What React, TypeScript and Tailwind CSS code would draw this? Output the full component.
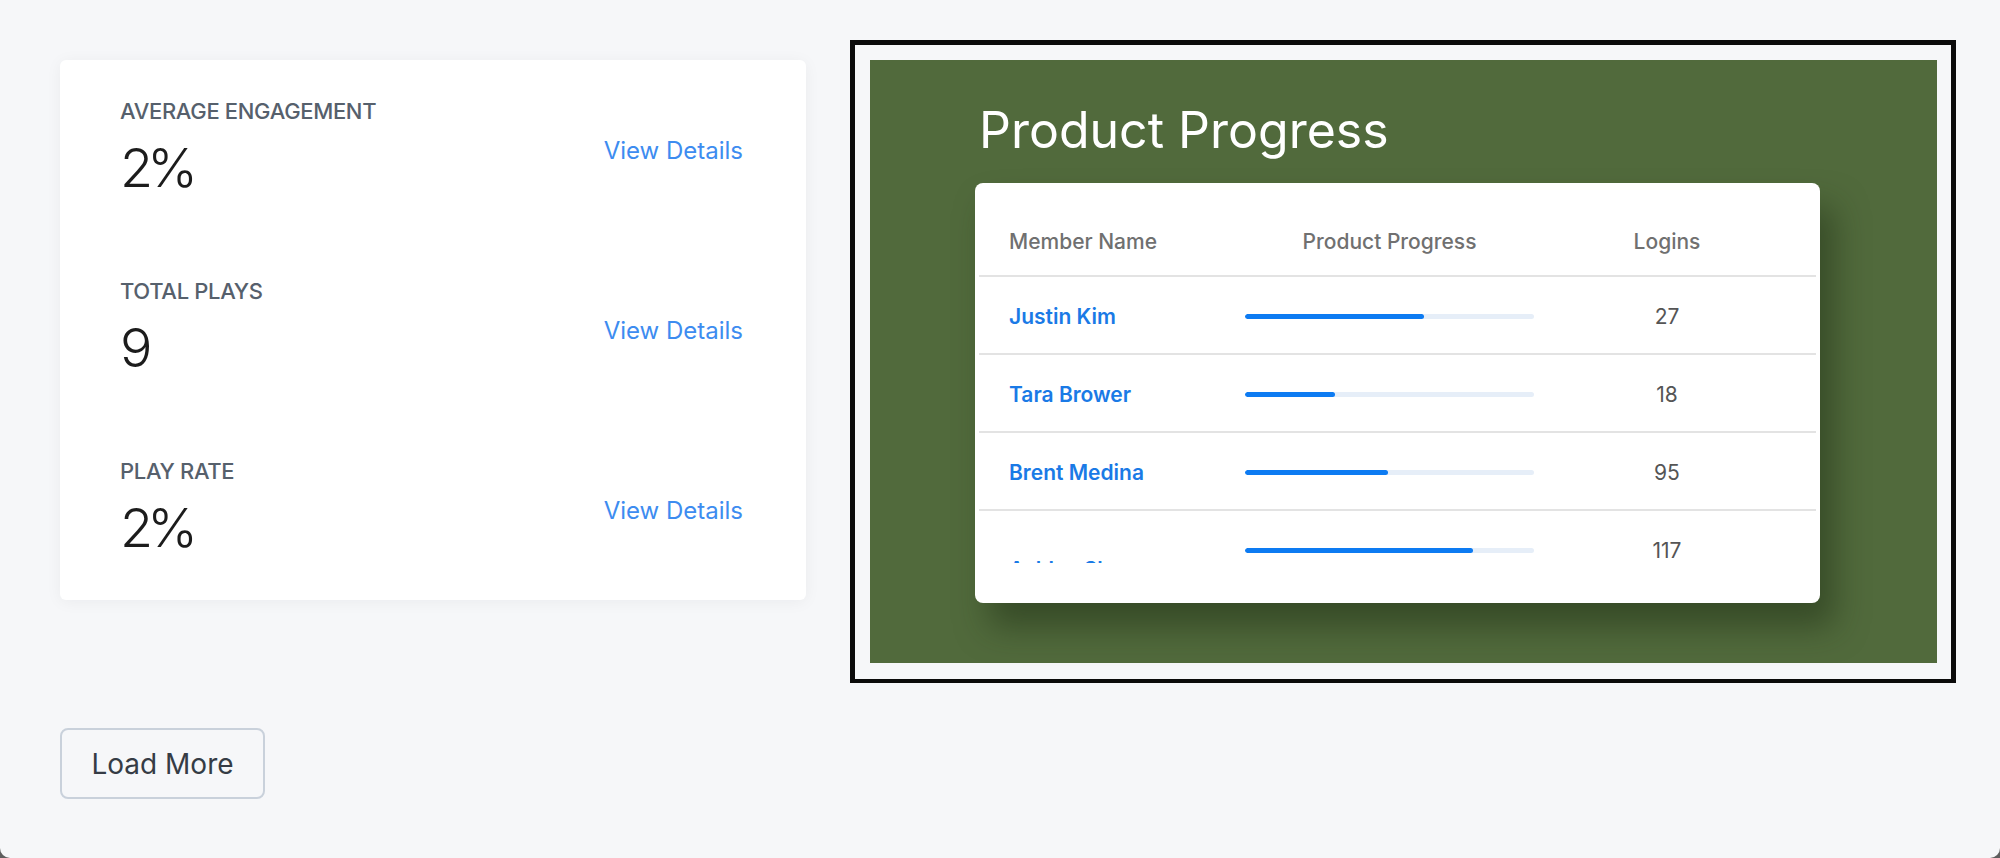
import React from "react";

const stats = [
  { label: "AVERAGE ENGAGEMENT", value: "2%" },
  { label: "TOTAL PLAYS", value: "9" },
  { label: "PLAY RATE", value: "2%" },
];

const members = [
  { name: "Justin Kim", pct: 62, logins: "27" },
  { name: "Tara Brower", pct: 31, logins: "18" },
  { name: "Brent Medina", pct: 49.5, logins: "95" },
  { name: "Ashley Shaw", pct: 79, logins: "117", clipped: true },
];

export default function App() {
  return (
    <div className="h-[858px] w-[2000px] bg-[#5e5e5e]" style={{ fontFamily: "Inter, 'Noto Sans', sans-serif" }}>
      <div className="h-full w-full rounded-b-[10px] bg-[#f6f7f9] pl-[60px] pt-[40px]">
        <div className="flex items-start gap-[44px]">
          {/* Left stats card */}
          <div className="mt-[20px] w-[746px] rounded-[6px] bg-white pl-[60px] pr-[63px] pt-[38px] pb-[44px] shadow-[0_2px_16px_rgba(15,23,42,0.05)] flex flex-col gap-[82px]">
            {stats.map((s) => (
              <div key={s.label} className="flex items-center justify-between">
                <div className="flex flex-col gap-[16px]">
                  <div className="text-[22px] leading-[26px] font-medium tracking-[-0.015em] text-[#56606c]">{s.label}</div>
                  <div className="text-[54px] leading-[56px] font-light tracking-[-0.11em] text-[#1c1c1c]">{s.value}</div>
                </div>
                <div className="pt-[8px] text-[24px] leading-[30px] text-[#3d8cf0]">View Details</div>
              </div>
            ))}
          </div>

          {/* Right framed image */}
          <div className="w-[1106px] border-[5px] border-b-[4px] border-[#0b0b0b] bg-[#f6f7f9] pl-[15px] pt-[15px] pb-[16px]">
            <div className="w-[1067px] h-[603px] bg-[#516a3c] pl-[105px] pt-[41px]">
              <div className="pl-[4px] text-[50px] leading-[58px] text-white">Product Progress</div>
              <div className="mt-[24px] w-[845px] rounded-[8px] bg-white px-[4px] pb-[40px] shadow-[14px_24px_32px_rgba(30,45,20,0.5)]">
                <div className="h-[380px] overflow-hidden">
                  <div className="grid grid-cols-[236px_289px_266px] items-center h-[94px] pt-[26px] pl-[30px] border-b-2 border-[#e3e3e3] text-[21px] font-medium text-[#707070]">
                    <div>Member Name</div>
                    <div className="text-center">Product Progress</div>
                    <div className="text-center">Logins</div>
                  </div>
                  {members.map((m) => (
                    <div key={m.name} className="grid grid-cols-[236px_289px_266px] items-center h-[78px] pt-[3px] pl-[30px] border-b-2 border-[#e3e3e3]">
                      <div className={`text-[21px] leading-[24px] font-semibold text-[#1a7ae6] ${m.clipped ? "mt-[38px]" : ""}`}>{m.name}</div>
                      <div className="h-[5px] w-[289px] rounded-full bg-[#e6eef8] overflow-hidden">
                        <div className="h-full rounded-full bg-[#0d7bf2]" style={{ width: `${m.pct}%` }} />
                      </div>
                      <div className="text-center text-[21px] text-[#555555]">{m.logins}</div>
                    </div>
                  ))}
                </div>
              </div>
            </div>
          </div>
        </div>

        <button className="mt-[45px] h-[71px] w-[205px] rounded-[8px] border-2 border-[#c9d1db] bg-[#f6f7f9] text-[28px] text-[#353c45]">
          Load More
        </button>
      </div>
    </div>
  );
}
